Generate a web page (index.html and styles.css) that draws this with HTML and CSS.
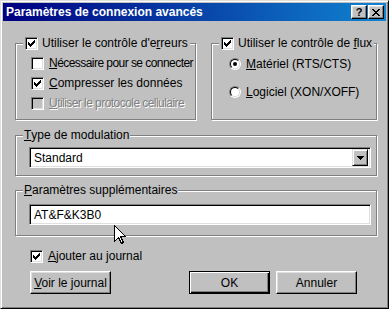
FILE: index.html
```html
<!DOCTYPE html>
<html>
<head>
    <meta charset="utf-8" />
    <title>Paramètres de connexion avancés</title>
    <link rel="stylesheet" href="styles.css">
</head>
<body>
    <div class="window">
        <div class="titlebar">
            <span class="title">Paramètres de connexion avancés</span>
            <span class="tbtn help">?</span>
            <span class="tbtn close">
                <svg width="8" height="7" viewBox="0 0 8 7" shape-rendering="crispEdges"><path d="M0 0h2v1h-2zM6 0h2v1h-2zM1 1h2v1h-2zM5 1h2v1h-2zM2 2h4v1h-4zM3 3h2v1h-2zM2 4h4v1h-4zM1 5h2v1h-2zM5 5h2v1h-2zM0 6h2v1h-2zM6 6h2v1h-2z" fill="#000"/></svg>
            </span>
        </div>

        <div class="content">
            <div class="toprow">
                <div class="group g-errors">
                    <div class="legend">
                        <span class="chk on"><svg width="7" height="7" viewBox="0 0 7 7" shape-rendering="crispEdges"><path d="M0 2h1v3h-1zM1 3h1v3h-1zM2 4h1v3h-1zM3 3h1v3h-1zM4 2h1v3h-1zM5 1h1v3h-1zM6 0h1v3h-1z"/></svg></span>
                        <span>Utiliser le contrôle d'e<u>r</u>reurs</span>
                    </div>
                    <div class="opt">
                        <span class="chk"></span>
                        <span class="tight"><u>N</u>écessaire pour se connecter</span>
                    </div>
                    <div class="opt">
                        <span class="chk on"><svg width="7" height="7" viewBox="0 0 7 7" shape-rendering="crispEdges"><path d="M0 2h1v3h-1zM1 3h1v3h-1zM2 4h1v3h-1zM3 3h1v3h-1zM4 2h1v3h-1zM5 1h1v3h-1zM6 0h1v3h-1z"/></svg></span>
                        <span><u>C</u>ompresser les données</span>
                    </div>
                    <div class="opt disabled">
                        <span class="chk"></span>
                        <span class="tight"><u>U</u>tiliser le protocole cellulaire</span>
                    </div>
                </div>

                <div class="group g-flux">
                    <div class="legend">
                        <span class="chk on"><svg width="7" height="7" viewBox="0 0 7 7" shape-rendering="crispEdges"><path d="M0 2h1v3h-1zM1 3h1v3h-1zM2 4h1v3h-1zM3 3h1v3h-1zM4 2h1v3h-1zM5 1h1v3h-1zM6 0h1v3h-1z"/></svg></span>
                        <span>Utiliser le contrôle de <u>f</u>lux</span>
                    </div>
                    <div class="opt radio-row">
                        <span class="radio"><span class="radio-in"><span class="dot"></span></span></span>
                        <span><u>M</u>atériel (RTS/CTS)</span>
                    </div>
                    <div class="opt radio-row">
                        <span class="radio"><span class="radio-in"></span></span>
                        <span><u>L</u>ogiciel (XON/XOFF)</span>
                    </div>
                </div>
            </div>

            <div class="group g-mod">
                <div class="legend text-legend"><u>T</u>ype de modulation</div>
                <div class="combo">
                    <span class="combo-text">Standard</span>
                    <span class="combo-btn">
                        <svg width="7" height="4" viewBox="0 0 7 4" shape-rendering="crispEdges"><path d="M0 0h7v1h-7zM1 1h5v1h-5zM2 2h3v1h-3zM3 3h1v1h-1z"/></svg>
                    </span>
                </div>
            </div>

            <div class="group g-extra">
                <div class="legend text-legend"><u>P</u>aramètres supplémentaires</div>
                <div class="field">AT&amp;F&amp;K3B0</div>
            </div>

            <div class="opt log">
                <span class="chk on"><svg width="7" height="7" viewBox="0 0 7 7" shape-rendering="crispEdges"><path d="M0 2h1v3h-1zM1 3h1v3h-1zM2 4h1v3h-1zM3 3h1v3h-1zM4 2h1v3h-1zM5 1h1v3h-1zM6 0h1v3h-1z"/></svg></span>
                <span><u>A</u>jouter au journal</span>
            </div>

            <div class="buttons">
                <span class="btn"><span><u>V</u>oir le journal</span></span>
                <span class="btn default ok"><span>OK</span></span>
                <span class="btn cancel"><span>Annuler</span></span>
            </div>
        </div>

        <svg class="cursor" width="12" height="20" viewBox="0 0 12 20" shape-rendering="crispEdges">
            <path d="M0.5 0.5 L0.5 16.5 L4.5 12.5 L7.5 18.5 L9.5 17.5 L6.5 11.5 L11.5 11.5 Z" fill="#fff" stroke="#000" stroke-width="1"/>
        </svg>
    </div>
</body>
</html>
```

FILE: styles.css
```css
html, body {
    margin: 0;
    padding: 0;
    background: #c0c0c0;
}

body {
    font-family: "Liberation Sans", Arial, sans-serif;
    font-size: 12px;
    color: #000;
    white-space: nowrap;
}

.window {
    position: relative;
    box-sizing: border-box;
    width: 389px;
    height: 309px;
    padding: 2px;
    background: #c0c0c0;
    border: 1px solid;
    border-color: #dfdfdf #000 #000 #dfdfdf;
    box-shadow: inset 1px 1px #fff, inset -1px -1px #808080;
}

/* title bar */
.titlebar {
    display: flex;
    align-items: center;
    height: 18px;
    padding: 0 2px 0 3px;
    background: linear-gradient(to right, #000080, #1084d0);
}

.title {
    flex: 1;
    color: #fff;
    font-weight: bold;
    font-size: 12px;
}

.tbtn {
    box-sizing: border-box;
    display: flex;
    align-items: center;
    justify-content: center;
    width: 16px;
    height: 14px;
    background: #c0c0c0;
    border: 1px solid;
    border-color: #fff #000 #000 #fff;
    box-shadow: inset -1px -1px #808080, inset 1px 1px #dfdfdf;
    font-weight: bold;
    font-size: 11px;
    line-height: 12px;
}

.tbtn.help {
    margin-right: 1px;
}

/* content */
.content {
    display: flex;
    flex-direction: column;
    padding: 22px 9px 0 12px;
}

.toprow {
    display: flex;
    gap: 15px;
}

.group {
    position: relative;
    box-sizing: border-box;
    border: 1px solid #808080;
    box-shadow: inset 1px 1px #fff, 1px 1px #fff;
}

.legend {
    position: absolute;
    top: -8px;
    left: 7px;
    height: 14px;
    display: flex;
    align-items: center;
    padding: 0 2px;
    background: #c0c0c0;
}

.text-legend {
    padding: 0 1px;
}

.g-errors {
    width: 181px;
    height: 77px;
    padding: 9px 0 0 15px;
}

.g-flux {
    flex: 1;
    height: 77px;
    padding: 6px 0 0 16px;
}

.g-mod {
    height: 41px;
    margin-top: 15px;
    padding: 11px 4px 0 13px;
}

.g-extra {
    height: 46px;
    margin-top: 14px;
    padding: 13px 4px 0 13px;
}

.opt {
    display: flex;
    align-items: center;
    height: 20px;
}

.opt.radio-row {
    height: 28px;
}

.opt.log {
    height: 16px;
    margin: 12px 0 0 15px;
}

.tight {
    letter-spacing: -0.55px;
}

/* checkbox */
.chk {
    box-sizing: border-box;
    flex: none;
    display: flex;
    width: 13px;
    height: 13px;
    padding: 2px;
    margin-right: 5px;
    background: #fff;
    border: 1px solid;
    border-color: #808080 #fff #fff #808080;
    box-shadow: inset 1px 1px #000, inset -1px -1px #dfdfdf;
}

.legend .chk {
    margin-right: 4px;
}

.disabled .chk {
    background: #c0c0c0;
}

.disabled {
    color: #808080;
    text-shadow: 1px 1px #fff;
}

/* radio */
.radio {
    box-sizing: border-box;
    flex: none;
    display: flex;
    width: 12px;
    height: 12px;
    margin: 0 5px 0 1px;
    border-radius: 50%;
    border: 1px solid;
    border-color: #808080 #fff #fff #808080;
}

.radio-in {
    box-sizing: border-box;
    display: flex;
    align-items: center;
    justify-content: center;
    width: 10px;
    height: 10px;
    border-radius: 50%;
    border: 1px solid;
    border-color: #000 #dfdfdf #dfdfdf #000;
    background: #fff;
}

.dot {
    width: 4px;
    height: 4px;
    border-radius: 50%;
    background: #000;
}

/* combo and edit */
.combo, .field {
    box-sizing: border-box;
    display: flex;
    align-items: center;
    height: 21px;
    width: 342px;
    background: #fff;
    border: 1px solid;
    border-color: #808080 #fff #fff #808080;
    box-shadow: inset 1px 1px #000, inset -1px -1px #dfdfdf;
}

.combo {
    padding: 2px;
}

.combo-text {
    flex: 1;
    padding-left: 2px;
}

.combo-btn {
    box-sizing: border-box;
    display: flex;
    align-items: center;
    justify-content: center;
    width: 16px;
    height: 17px;
    background: #c0c0c0;
    border: 1px solid;
    border-color: #dfdfdf #000 #000 #dfdfdf;
    box-shadow: inset 1px 1px #fff, inset -1px -1px #808080;
}

.field {
    padding-left: 4px;
}

/* buttons */
.buttons {
    display: flex;
    margin: 7px 0 0 15px;
}

.btn {
    box-sizing: border-box;
    display: flex;
    align-items: center;
    justify-content: center;
    width: 81px;
    height: 23px;
    background: #c0c0c0;
    border: 1px solid;
    border-color: #fff #000 #000 #fff;
    box-shadow: inset -1px -1px #808080, inset 1px 1px #dfdfdf;
}

.btn.default {
    border: 1px solid #000;
    box-shadow: inset 1px 1px #fff, inset -1px -1px #000, inset -2px -2px #808080;
}

.btn.ok {
    margin-left: 78px;
}

.btn.cancel {
    margin-left: 6px;
}

.cursor {
    position: absolute;
    left: 113px;
    top: 224px;
}
```
